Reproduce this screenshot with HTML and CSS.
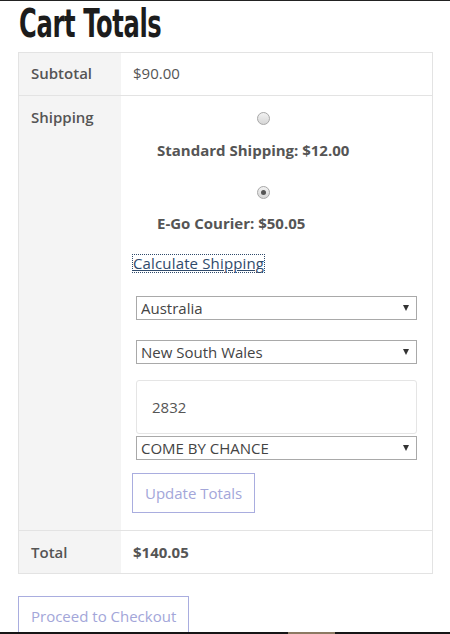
FILE: index.html
```html
<!DOCTYPE html>
<html>
<head>
<meta charset="utf-8">
<link rel="stylesheet" href="styles.css">
</head>
<body>
<div class="topline"></div>
<main class="cart">
  <h2 class="title"><span class="title-text">Cart Totals</span></h2>
  <table class="totals">
    <tr class="row-sub">
      <th>Subtotal</th>
      <td>$90.00</td>
    </tr>
    <tr class="row-ship">
      <th>Shipping</th>
      <td>
        <ul class="methods">
          <li>
            <div class="radio-line"><input type="radio" name="ship" class="radio"></div>
            <label class="method">Standard Shipping: $12.00</label>
          </li>
          <li>
            <div class="radio-line"><input type="radio" name="ship" class="radio" checked></div>
            <label class="method">E-Go Courier: $50.05</label>
          </li>
        </ul>
        <a class="calc" href="#">Calculate Shipping</a>
        <form class="calc-form">
          <div class="select"><select><option>Australia</option></select></div>
          <div class="select"><select><option>New South Wales</option></select></div>
          <input class="postcode" type="text" value="2832">
          <div class="select tight"><select><option>COME BY CHANCE</option></select></div>
          <button type="button" class="btn update">Update Totals</button>
        </form>
      </td>
    </tr>
    <tr class="row-total">
      <th>Total</th>
      <td><strong>$140.05</strong></td>
    </tr>
  </table>
  <div class="checkout">
    <button type="button" class="btn">Proceed to Checkout</button>
  </div>
</main>
<div class="bottomline"><span class="tab"></span></div>
</body>
</html>
```

FILE: styles.css
```css
html, body {
  margin: 0;
  padding: 0;
  background: #fff;
  height: 634px;
  overflow: hidden;
}
body {
  font-family: "Open Sans", "Liberation Sans", sans-serif;
  font-size: 15px;
  color: #555;
  position: relative;
}
.topline {
  height: 1px;
  background: #222;
}
.cart {
  padding: 0 18px 0 18px;
}
.title {
  margin: 0;
  height: 51px;
  padding-left: 1px;
  font-family: "DejaVu Sans Condensed", "DejaVu Sans", sans-serif;
  font-weight: 700;
  font-size: 39px;
  line-height: 45px;
  color: #1c1c1c;
}
.title-text {
  display: inline-block;
  transform: scaleX(0.69);
  transform-origin: left center;
  letter-spacing: -0.5px;
}
.totals {
  width: 415px;
  border-collapse: collapse;
  border: 1px solid #e3e3e3;
}
.totals th, .totals td {
  border-top: 1px solid #e3e3e3;
  vertical-align: top;
  text-align: left;
  line-height: 20px;
}
.totals th {
  width: 78px;
  background: #f4f4f4;
  font-weight: 600;
  padding: 11px 12px;
  color: #555;
}
.totals td {
  padding: 11px 12px;
  color: #555;
}
.row-sub th, .row-sub td {
  padding-top: 10px;
  padding-bottom: 12px;
}
.row-total strong {
  font-weight: 700;
}
.methods {
  list-style: none;
  margin: 0;
  padding: 0;
}
.radio-line {
  height: 20px;
  padding-left: 124px;
  display: flex;
  align-items: center;
}
.methods li:first-child .radio-line {
  padding-top: 2px;
  height: 18px;
}
.radio {
  appearance: none;
  -webkit-appearance: none;
  width: 13px;
  height: 13px;
  margin: 0;
  border-radius: 50%;
  border: 1px solid #a8a8a8;
  background: linear-gradient(#f2f2f2, #d6d6d6);
  box-sizing: border-box;
  position: relative;
}
.radio:checked::after {
  content: "";
  position: absolute;
  left: 3px;
  top: 3px;
  width: 5px;
  height: 5px;
  border-radius: 50%;
  background: #555;
}
.method {
  display: block;
  padding: 13px 0 22px 24px;
  font-weight: 700;
  color: #555;
}
.methods li + li .method {
  padding-top: 11px;
  padding-bottom: 20px;
}
.calc {
  display: inline-block;
  color: #2f4a6b;
  text-decoration: underline;
  outline: 1px dotted #2f4a6b;
  line-height: 17px;
  letter-spacing: 0.15px;
}
.calc-form {
  margin: 23px 0 0 3px;
  width: 281px;
}
.select {
  position: relative;
  margin-bottom: 20px;
}
.select.tight {
  margin-bottom: 13px;
}
.select select {
  appearance: none;
  -webkit-appearance: none;
  display: block;
  width: 100%;
  height: 24px;
  margin: 0;
  padding: 0 20px 0 4px;
  border: 1px solid #a9a9a9;
  border-radius: 0;
  background: #fff;
  font-family: "Open Sans", "Liberation Sans", sans-serif;
  font-size: 15px;
  color: #444;
  line-height: 22px;
}
.select::after {
  content: "";
  position: absolute;
  right: 8px;
  top: 9px;
  border-left: 3.5px solid transparent;
  border-right: 3.5px solid transparent;
  border-top: 6px solid #333;
  pointer-events: none;
}
.postcode {
  display: block;
  box-sizing: border-box;
  width: 100%;
  height: 54px;
  margin: -4px 0 2px 0;
  padding: 0 15px;
  border: 1px solid #e5e5e5;
  border-radius: 3px;
  font-family: "Open Sans", "Liberation Sans", sans-serif;
  font-size: 15px;
  color: #555;
}
.btn {
  display: inline-block;
  background: #fff;
  border: 1px solid #a9addf;
  color: #a3a6d9;
  font-family: "Open Sans", "Liberation Sans", sans-serif;
  font-size: 15px;
  line-height: 20px;
  padding: 9px 12px;
  margin: 0;
  border-radius: 0;
}
.update {
  margin-left: -4px;
  margin-bottom: 6px;
}
.checkout {
  margin-top: 22px;
}
.bottomline {
  position: absolute;
  left: 0;
  right: 0;
  top: 632px;
  height: 2px;
  background: #161616;
}
.bottomline .tab {
  position: absolute;
  left: 288px;
  width: 47px;
  top: 0;
  height: 2px;
  background: #8c7a63;
}
```
